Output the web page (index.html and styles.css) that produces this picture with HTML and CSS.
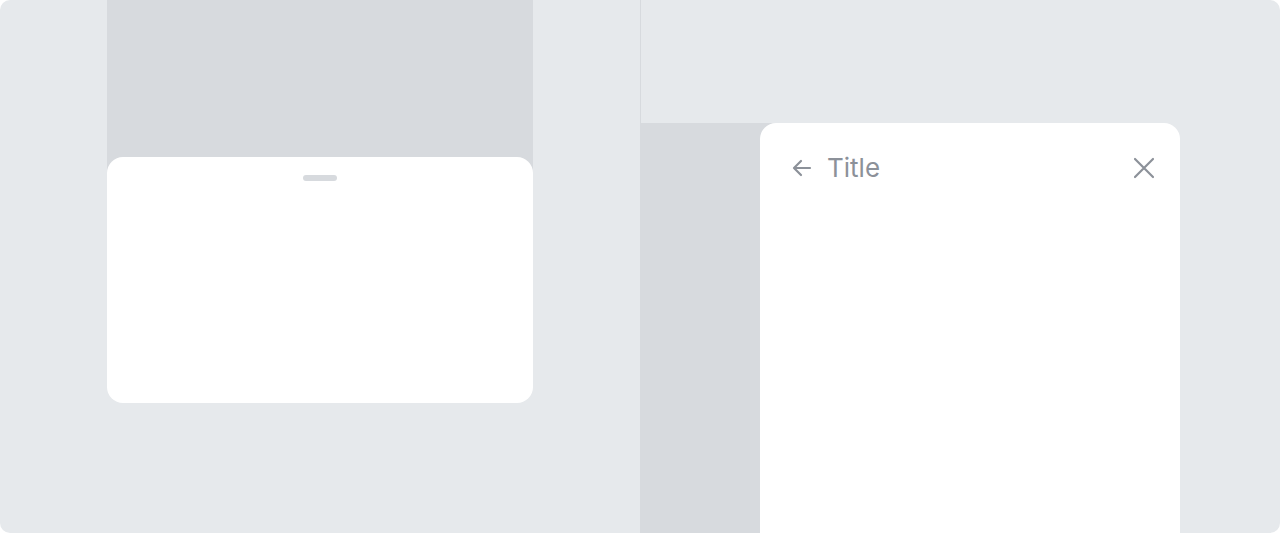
FILE: index.html
```html
<!DOCTYPE html>
<html lang="en">
<head>
    <meta charset="UTF-8">
    <title>Sheets</title>
    <link rel="stylesheet" href="styles.css">
</head>
<body>
    <div class="frame">
        <div class="pane pane-left">
            <div class="screen">
                <div class="sheet">
                    <div class="handle"></div>
                </div>
            </div>
        </div>

        <div class="pane pane-right">
            <div class="topband"></div>
            <div class="drawer-row">
                <div class="drawer">
                    <div class="drawer-head">
                        <svg class="icon" viewBox="0 0 24 24" width="24" height="24">
                            <path d="M20 12H4.5M11 5l-7 7 7 7" fill="none" stroke="currentColor" stroke-width="2.2" stroke-linecap="round" stroke-linejoin="round"/>
                        </svg>
                        <span class="title">Title</span>
                        <svg class="icon" viewBox="0 0 24 24" width="24" height="24">
                            <path d="M3 3l18 18M21 3L3 21" fill="none" stroke="currentColor" stroke-width="2.2" stroke-linecap="round"/>
                        </svg>
                    </div>
                </div>
            </div>
        </div>
    </div>
</body>
</html>
```

FILE: styles.css
```css
body { margin: 0; background: #fff; font-family: Inter, "Noto Sans", sans-serif; }
.frame {
    width: 1280px; height: 533px; border-radius: 10px; overflow: hidden;
    display: grid; grid-template-columns: 640px 1px 639px;
    background: #e6e9ec;
}
.pane { height: 533px; }
.pane-left { padding-left: 107px; }
.pane-right { grid-column: 3; display: flex; flex-direction: column; }
.frame::before { content: ""; grid-column: 2; grid-row: 1; background: #d7dade; }

.screen {
    width: 426px; height: 403px; padding-top: 157px; box-sizing: border-box;
    background: linear-gradient(#d7dade 0 180px, transparent 180px);
}
.sheet {
    height: 246px; background: #fff; border-radius: 16px;
    display: flex; justify-content: center; padding-top: 18px; box-sizing: border-box;
}
.handle { width: 34px; height: 6px; border-radius: 3px; background: #d7dade; }

.topband { height: 123px; }
.drawer-row {
    flex: 1; display: flex; padding-left: 119px;
    background: linear-gradient(to right, #d7dade 0 140px, transparent 140px);
}
.drawer { width: 420px; background: #fff; border-radius: 16px 16px 0 0; }
.drawer-head {
    display: flex; align-items: center; padding: 33px 24px 0 30px; color: #8c9199;
}
.icon { display: block; flex: none; }
.title { margin-left: 13px; font-size: 26px; line-height: 24px; flex: 1; }
```
